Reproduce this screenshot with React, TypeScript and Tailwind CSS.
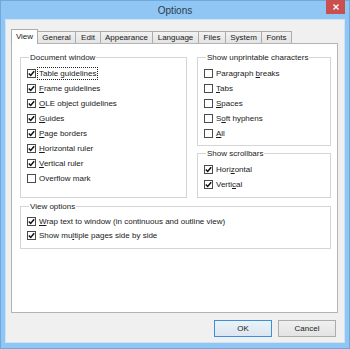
import type { ReactNode } from "react";

// label with "&" before the access key letter, like the win32 resource files
function Label({ text }: { text: string }) {
  const i = text.indexOf("&");
  if (i < 0) return <>{text}</>;
  return (
    <>
      {text.slice(0, i)}
      <u className="underline-offset-1">{text[i + 1]}</u>
      {text.slice(i + 2)}
    </>
  );
}

function CheckRow({
  text,
  checked,
  focus,
  h = "h-[15px]",
}: {
  text: string;
  checked?: boolean;
  focus?: boolean;
  h?: string;
}) {
  return (
    <div className={`flex items-center ${h} gap-[2px]`}>
      <span className="w-[9px] h-[9px] border border-[#4a4a4a] bg-white flex items-center justify-center shrink-0">
        {checked && (
          <svg width="7" height="7" viewBox="0 0 7 7">
            <path d="M0.8 3.4 L2.7 5.4 L6.2 1.2" stroke="#111" strokeWidth="1.5" fill="none" />
          </svg>
        )}
      </span>
      <span
        className={`leading-[11px] px-[1px] ${
          focus ? "outline outline-1 outline-dotted outline-[#222]" : ""
        }`}
      >
        <Label text={text} />
      </span>
    </div>
  );
}

function Group({ title, children, className }: { title: string; children: ReactNode; className?: string }) {
  return (
    <fieldset className={`border border-[#d5d5d5] pl-[6px] pr-[6px] ${className ?? ""}`}>
      <legend className="ml-[2px] px-[1px] leading-[11px]">{title}</legend>
      {children}
    </fieldset>
  );
}

const tabs = [
  { name: "View", w: "w-[27px]" },
  { name: "General", w: "w-[38px]" },
  { name: "Edit", w: "w-[25px]" },
  { name: "Appearance", w: "w-[52px]" },
  { name: "Language", w: "w-[46px]" },
  { name: "Files", w: "w-[27px]" },
  { name: "System", w: "w-[36px]" },
  { name: "Fonts", w: "w-[30px]" },
];

export default function App() {
  return (
    <div className="w-[350px] h-[349px] bg-[#8fc6f4] border border-[#6fa8dc] flex flex-col text-[8px] text-[#1a1a1a] font-['Liberation_Sans',Arial,sans-serif]">
      {/* title bar */}
      <div className="h-[18px] relative flex items-center justify-center">
        <span className="text-[10px] text-[#2d3b48]">Options</span>
        <div className="absolute right-[4px] -top-px w-[19px] h-[14px] bg-[#c9504e] flex items-center justify-center">
          <svg width="6" height="6" viewBox="0 0 6 6">
            <path d="M0.5 0.5 L5.5 5.5 M5.5 0.5 L0.5 5.5" stroke="#fff" strokeWidth="1.4" />
          </svg>
        </div>
      </div>

      {/* client area */}
      <div className="mx-[4px] h-[324px] bg-[#f0f0f0] border border-[#cfe3f5] pl-[5px] pr-[6px] pt-[9px] flex flex-col">
        <div className="flex items-end h-[14px]">
          {tabs.map((t, i) =>
            i === 0 ? (
              <div
                key={t.name}
                className={`${t.w} h-[15px] -mb-px relative z-10 bg-white border border-b-0 border-[#acacac] flex items-center justify-center`}
              >
                {t.name}
              </div>
            ) : (
              <div
                key={t.name}
                className={`${t.w} h-[12px] border-t border-r border-[#acacac] bg-gradient-to-b from-[#f2f2f2] to-[#e3e3e3] flex items-center justify-center`}
              >
                {t.name}
              </div>
            )
          )}
        </div>

        <div className="w-[327px] h-[270px] bg-white border border-[#b4b4b4] pl-[8px] pr-[6px] pt-[8px] flex flex-col gap-[3px]">
          <div className="grid grid-cols-[167px_134px] gap-x-[10px]">
            <Group title="Document window" className="pt-[3px]">
              <CheckRow text="Table guidelines" checked focus />
              <CheckRow text="&Frame guidelines" checked />
              <CheckRow text="&OLE object guidelines" checked />
              <CheckRow text="&Guides" checked />
              <CheckRow text="&Page borders" checked />
              <CheckRow text="&Horizontal ruler" checked />
              <CheckRow text="&Vertical ruler" checked />
              <CheckRow text="Overflow mark" />
            </Group>
            <div className="flex flex-col gap-[2px]">
              <Group title="Show unprintable characters" className="pt-[3px] pb-[4px]">
                <CheckRow text="Paragraph &breaks" />
                <CheckRow text="&Tabs" />
                <CheckRow text="&Spaces" />
                <CheckRow text="S&oft hyphens" />
                <CheckRow text="&All" />
              </Group>
              <Group title="Show scrollbars" className="pt-[3px] pb-[5px]">
                <CheckRow text="Hori&zontal" checked />
                <CheckRow text="Verti&cal" checked />
              </Group>
            </div>
          </div>
          <Group title="View options" className="w-[311px] pt-[2px] pb-[6px]">
            <CheckRow text="&Wrap text to window (in continuous and outline view)" checked h="h-[14px]" />
            <CheckRow text="Show mu&ltiple pages side by side" checked h="h-[14px]" />
          </Group>
        </div>

        <div className="flex justify-end gap-[6px] mt-[7px] pr-[2px]">
          <button className="w-[58px] h-[17px] border border-[#3c8fdc] bg-gradient-to-b from-[#eaf2fa] to-[#dde6ee]">
            OK
          </button>
          <button className="w-[58px] h-[17px] border border-[#acacac] bg-gradient-to-b from-[#f0f0f0] to-[#e3e3e3]">
            Cancel
          </button>
        </div>
      </div>
    </div>
  );
}
